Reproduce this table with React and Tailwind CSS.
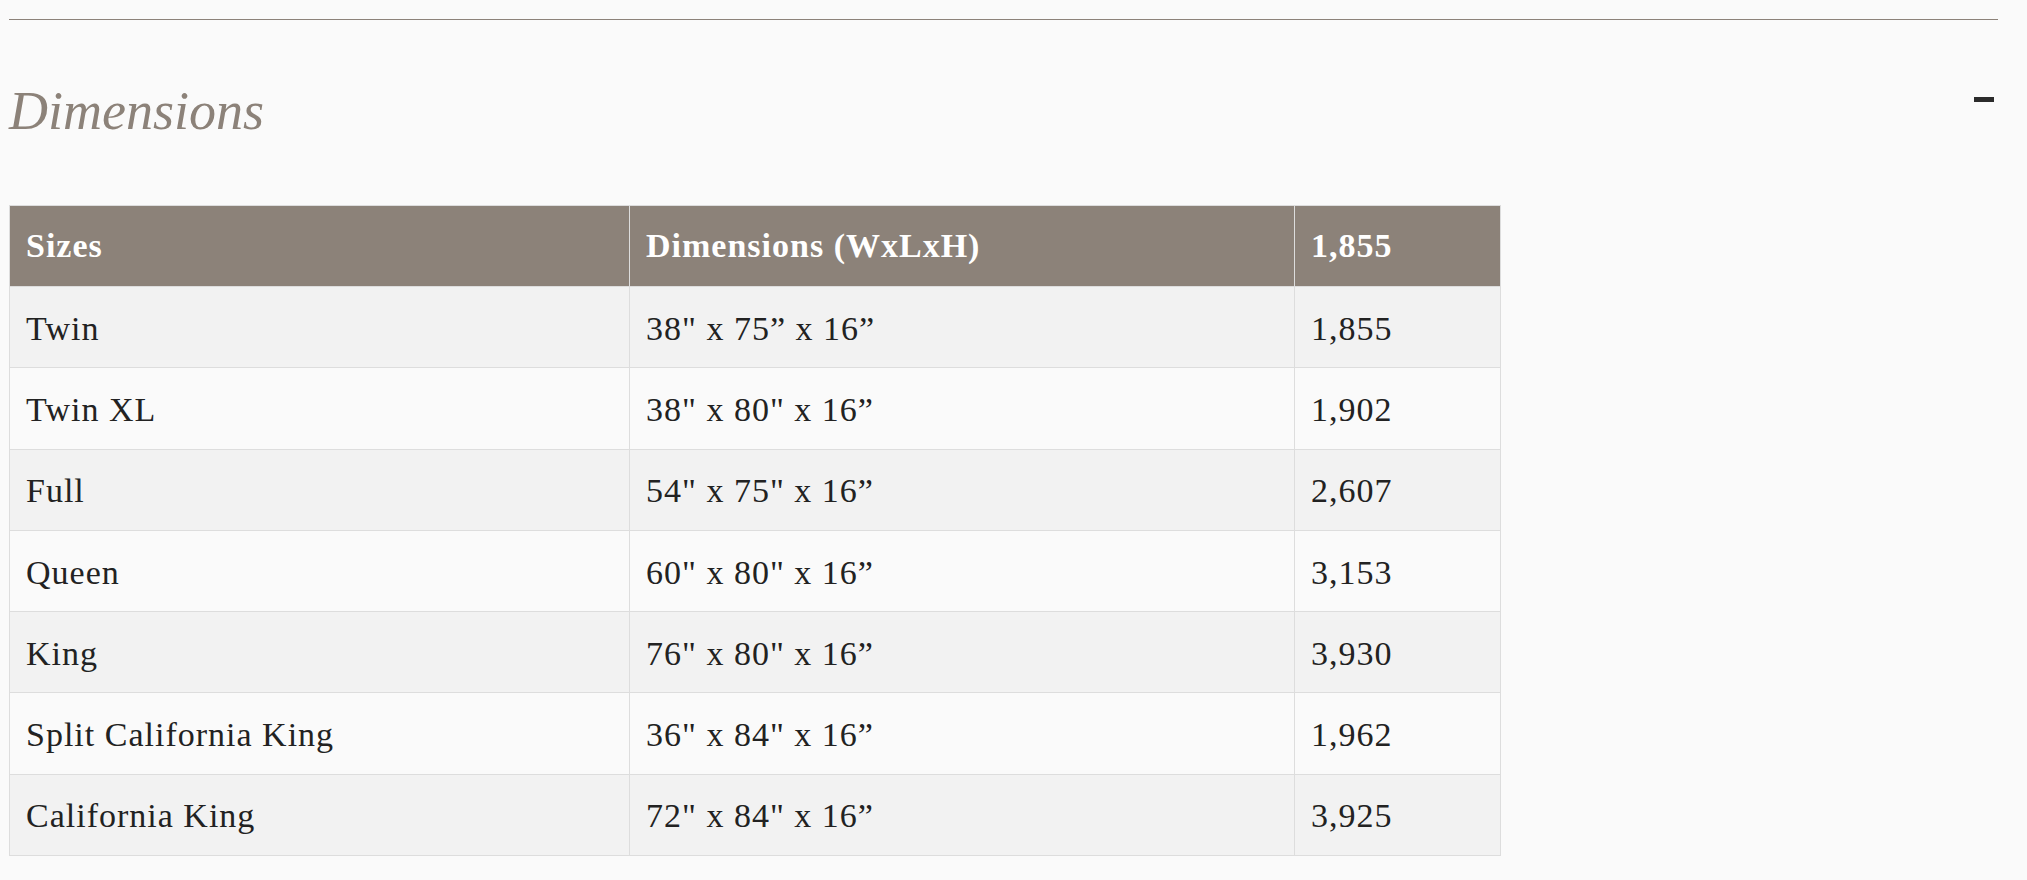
const rows = [
  { size: 'Twin', dims: '38" x 75” x 16”', count: '1,855' },
  { size: 'Twin XL', dims: '38" x 80" x 16”', count: '1,902' },
  { size: 'Full', dims: '54" x 75" x 16”', count: '2,607' },
  { size: 'Queen', dims: '60" x 80" x 16”', count: '3,153' },
  { size: 'King', dims: '76" x 80" x 16”', count: '3,930' },
  { size: 'Split California King', dims: '36" x 84" x 16”', count: '1,962' },
  { size: 'California King', dims: '72" x 84" x 16”', count: '3,925' },
];

export default function App() {
  return (
    <div className="min-h-[880px] bg-[#fafafa] pt-[19px] pl-[9px] pr-[29px] font-['Liberation_Serif',serif] text-[#222]">
      <div className="border-t border-[#8c8279]" />

      {/* Heading row */}
      <div className="mt-[64px] flex items-start justify-between">
        <h2 className="h-[54px] text-[54px] leading-[54px] italic font-normal text-[#8c8279]">
          Dimensions
        </h2>
        <div className="mt-[13px] mr-[4px] h-[5px] w-[20px] bg-[#2b2b2b]" />
      </div>

      <table className="mt-[67px] w-[1491px] table-fixed border-collapse border border-[#dddddd] text-[34px] tracking-[1px]">
        <colgroup>
          <col className="w-[620px]" />
          <col className="w-[665px]" />
          <col className="w-[206px]" />
        </colgroup>
        <thead>
          <tr className="h-[81px] bg-[#8c8279] text-white">
            <th className="border border-[#dddddd] px-4 text-left align-middle font-bold leading-none">Sizes</th>
            <th className="border border-[#dddddd] px-4 text-left align-middle font-bold leading-none">Dimensions (WxLxH)</th>
            <th className="border border-[#dddddd] px-4 text-left align-middle font-bold leading-none">1,855</th>
          </tr>
        </thead>
        <tbody>
          {rows.map((r, i) => (
            <tr key={r.size} className={`h-[81.3px] ${i % 2 === 0 ? 'bg-[#f2f2f2]' : 'bg-[#fafafa]'}`}>
              <td className="border border-[#dddddd] px-4 pt-[3px] align-middle leading-none">{r.size}</td>
              <td className="border border-[#dddddd] px-4 pt-[3px] align-middle leading-none">{r.dims}</td>
              <td className="border border-[#dddddd] px-4 pt-[3px] align-middle leading-none">{r.count}</td>
            </tr>
          ))}
        </tbody>
      </table>
    </div>
  );
}
